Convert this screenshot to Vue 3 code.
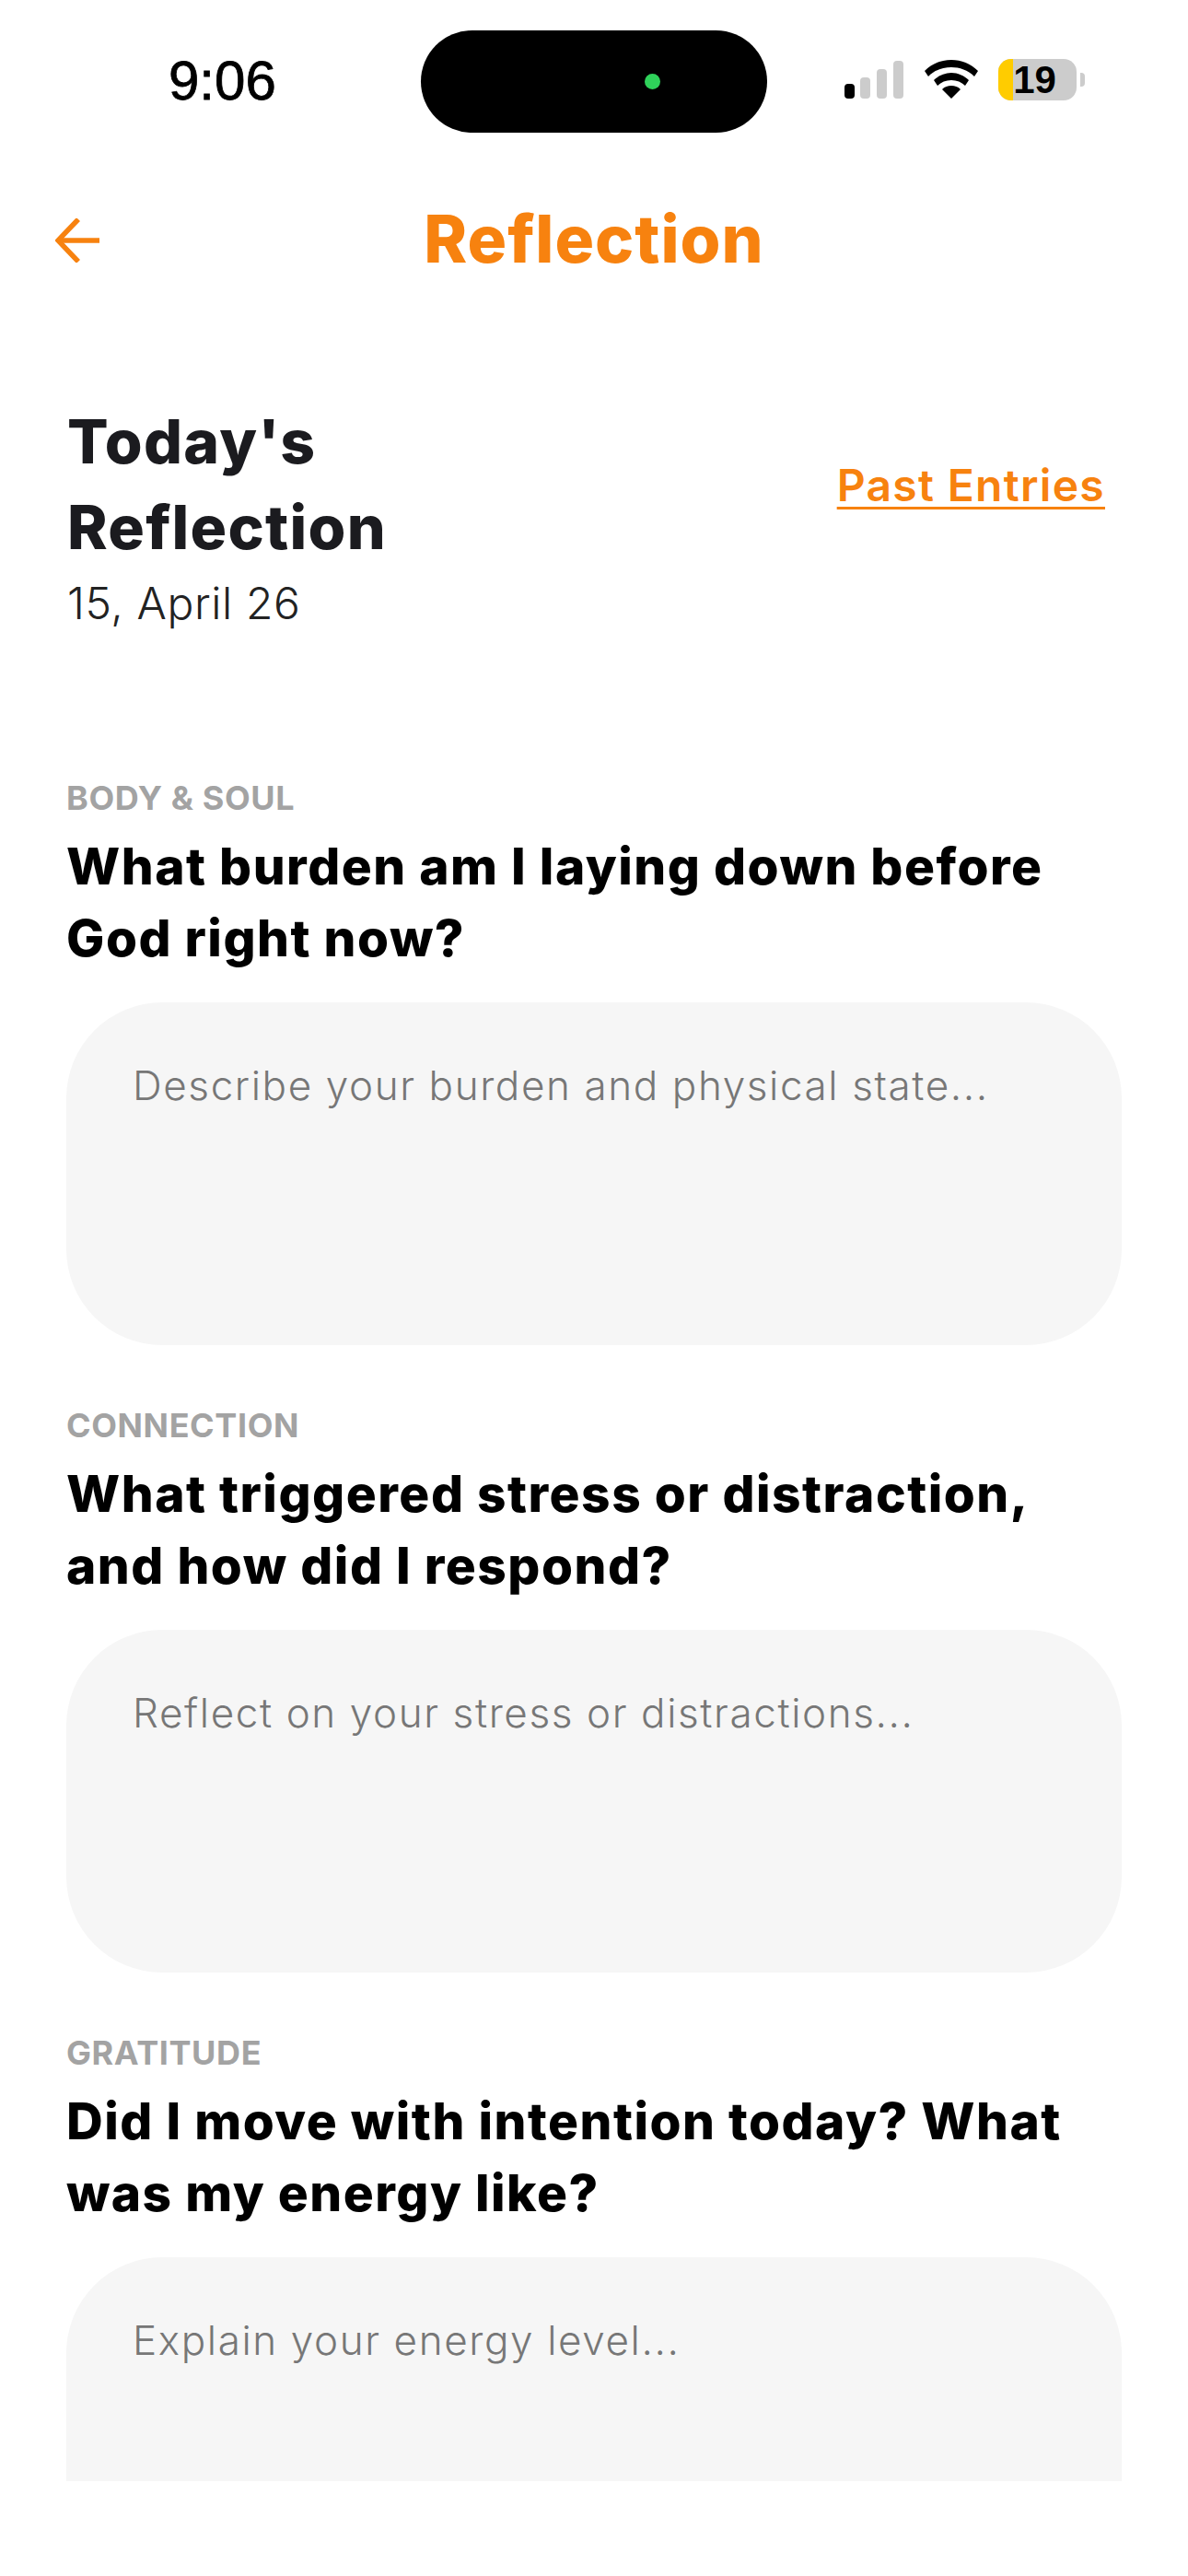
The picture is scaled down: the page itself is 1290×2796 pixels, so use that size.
<template>
  <div class="screen">
    <div class="status">
      <span class="time">9:06</span>
      <div class="island"><i class="cam"></i></div>
      <div class="status-icons">
        <svg class="signal" width="64" height="41" viewBox="0 0 64 41">
          <rect x="0" y="25" width="11" height="16" rx="4" fill="#000" />
          <rect x="17" y="18" width="11" height="23" rx="4" fill="#ccc" />
          <rect x="35" y="9" width="11" height="32" rx="4" fill="#ccc" />
          <rect x="53" y="0" width="11" height="41" rx="4" fill="#ccc" />
        </svg>
        <svg class="wifi" width="58" height="42" viewBox="0 0 58 42">
          <path d="M29 0C18 0 8 4 0 12l4 6C11 11 20 8 29 8s18 3 25 10l4-6C50 4 40 0 29 0Z" fill="#000" />
          <path d="M29 14c-7 0-14 3-19 8l4 6c4-4 9-6 15-6s11 2 15 6l4-6c-5-5-12-8-19-8Z" fill="#000" />
          <path d="M29 28c-4 0-7 1-10 4l10 10 10-10c-3-3-6-4-10-4Z" fill="#000" />
        </svg>
        <div class="battery">
          <div class="cell"><i class="charge"></i><span>19</span></div>
          <i class="tip"></i>
        </div>
      </div>
    </div>

    <header class="nav">
      <svg class="back" width="48" height="48" viewBox="0 0 48 48" fill="none" stroke="#f7820f" stroke-width="5.5">
        <path d="M25 1 3 24l22 23" />
        <path d="M3 24h45" />
      </svg>
      <h1>Reflection</h1>
    </header>

    <div class="intro">
      <div>
        <h2>Today's<br />Reflection</h2>
        <p class="date">15, April 26</p>
      </div>
      <a class="past">Past Entries</a>
    </div>

    <main class="list">
      <section v-for="s in sections" :key="s.label" class="block">
        <div class="label">{{ s.label }}</div>
        <h3>{{ s.line1 }}<br />{{ s.line2 }}</h3>
        <div class="field">{{ s.hint }}</div>
      </section>
    </main>
  </div>
</template>

<script setup>
const sections = [
  {
    label: 'BODY & SOUL',
    line1: 'What burden am I laying down before',
    line2: 'God right now?',
    hint: 'Describe your burden and physical state...',
  },
  {
    label: 'CONNECTION',
    line1: 'What triggered stress or distraction,',
    line2: 'and how did I respond?',
    hint: 'Reflect on your stress or distractions...',
  },
  {
    label: 'GRATITUDE',
    line1: 'Did I move with intention today? What',
    line2: 'was my energy like?',
    hint: 'Explain your energy level...',
  },
]
</script>

<style>
html, body { margin: 0; background: #fff; }
</style>

<style scoped>
.screen {
  width: 1290px;
  height: 2796px;
  overflow: hidden;
  background: #fff;
  font-family: Inter, "Liberation Sans", sans-serif;
}
.status {
  display: flex;
  align-items: flex-start;
  height: 144px;
  box-sizing: border-box;
  padding: 33px 0 0 183px;
}
.time {
  width: 274px;
  margin-top: 20px;
  font: 500 60px/70px "Liberation Sans", sans-serif;
  color: #000;
  -webkit-text-stroke: 0.8px #000;
}
.island {
  position: relative;
  width: 376px;
  height: 111px;
  border-radius: 56px;
  background: #000;
}
.cam {
  position: absolute;
  left: 243px;
  top: 47px;
  width: 17px;
  height: 17px;
  border-radius: 50%;
  background: #2fd15a;
}
.status-icons {
  display: flex;
  align-items: flex-end;
  height: 76px;
  margin-left: 84px;
  gap: 23px;
}
.signal, .wifi { margin-bottom: 2px; }
.battery { display: flex; align-items: center; margin-left: -1px; }
.cell {
  position: relative;
  width: 85px;
  height: 45px;
  border-radius: 14px;
  overflow: hidden;
  background: #ccc;
  text-align: center;
  font: 700 42px/45px "Liberation Sans", sans-serif;
  color: #000;
}
.cell span { position: relative; left: -3px; }
.charge {
  position: absolute;
  left: 0;
  top: 0;
  bottom: 0;
  width: 16px;
  background: #ffcc00;
}
.tip {
  width: 5px;
  height: 15px;
  margin-left: 4px;
  border-radius: 0 4px 4px 0;
  background: #ccc;
}
.nav {
  position: relative;
  display: flex;
  justify-content: center;
  align-items: center;
  height: 90px;
  margin-top: 71px;
}
.nav h1 {
  margin: 0 0 3px;
  font-size: 71px;
  font-weight: 800;
  line-height: 90px;
  letter-spacing: 1px;
  color: #f7820f;
}
.back {
  position: absolute;
  left: 60px;
  top: 22px;
}
.intro {
  display: flex;
  justify-content: space-between;
  align-items: center;
  padding: 0 90px 0 73px;
  margin-top: 128px;
}
.intro h2 {
  margin: 0;
  font-size: 66px;
  font-weight: 800;
  line-height: 93px;
  letter-spacing: 1.3px;
  color: #1b1b1f;
}
.date {
  margin: 6px 0 0;
  font-size: 48px;
  font-weight: 300;
  line-height: 60px;
  letter-spacing: 0.6px;
  color: #222;
}
.past {
  margin-bottom: 66px;
  font-size: 48px;
  font-weight: 600;
  letter-spacing: 1.3px;
  color: #f7820f;
  text-decoration: underline;
  text-underline-offset: 6px;
  text-decoration-thickness: 3px;
}
.list {
  height: 1849px;
  margin-top: 159px;
  padding: 0 72px;
  overflow: hidden;
}
.block { margin-bottom: 65px; }
.label {
  font-size: 36px;
  font-weight: 700;
  line-height: 44px;
  letter-spacing: 0.6px;
  color: #a3a3a3;
}
.block h3 {
  margin: 13px 0 0;
  font-size: 55px;
  font-weight: 800;
  line-height: 78px;
  letter-spacing: 1.5px;
  color: #000;
}
.field {
  box-sizing: border-box;
  height: 372px;
  margin-top: 31px;
  padding: 60px 72px;
  border-radius: 104px;
  background: #f6f6f6;
  font-size: 44px;
  font-weight: 300;
  line-height: 60px;
  letter-spacing: 1.6px;
  color: #777;
}
</style>
